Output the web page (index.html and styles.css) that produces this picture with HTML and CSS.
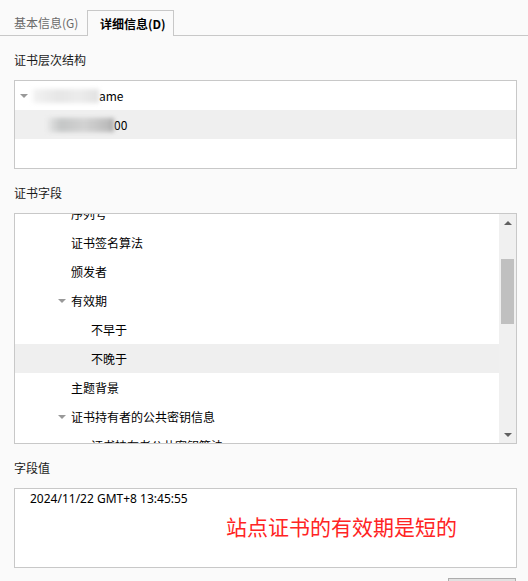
FILE: index.html
```html
<!DOCTYPE html>
<html lang="zh-CN">
<head>
<meta charset="UTF-8">
<title>证书查看器</title>
<link rel="stylesheet" href="styles.css">
</head>
<body>
    <div class="tabs">
        <div class="tab">基本信息(G)</div>
        <div class="tab active">详细信息(D)</div>
    </div>

    <div class="content">
        <div class="label">证书层次结构</div>
        <div class="box chain">
            <div class="row">
                <span class="caret"></span>
                <span class="smudge wide"></span><span>ame</span>
            </div>
            <div class="row selected indent-1">
                <span class="smudge dark"></span><span>00</span>
            </div>
        </div>

        <div class="label">证书字段</div>
        <div class="box fields">
            <div class="tree-view">
                <ul class="tree">
                    <li class="row lvl-1">序列号</li>
                    <li class="row lvl-1">证书签名算法</li>
                    <li class="row lvl-1">颁发者</li>
                    <li class="row lvl-1 open"><span class="caret"></span>有效期</li>
                    <li class="row lvl-2">不早于</li>
                    <li class="row lvl-2 selected">不晚于</li>
                    <li class="row lvl-1">主题背景</li>
                    <li class="row lvl-1 open"><span class="caret"></span>证书持有者的公共密钥信息</li>
                    <li class="row lvl-2">证书持有者公共密钥算法</li>
                </ul>
            </div>
            <div class="scrollbar">
                <div class="sb-btn"><span class="arrow up"></span></div>
                <div class="sb-track"><div class="sb-thumb"></div></div>
                <div class="sb-btn"><span class="arrow down"></span></div>
            </div>
        </div>

        <div class="label">字段值</div>
        <div class="box value">
            <div class="value-text">2024/11/22 GMT+8 13:45:55</div>
            <div class="note">站点证书的有效期是短的</div>
        </div>

        <div class="footer">
            <button class="btn">导出(E)...</button>
        </div>
    </div>
</body>
</html>
```

FILE: styles.css
```css
/* Global styles */
body {
    margin: 0;
    background-color: #fafafa;
    font-family: "Noto Sans CJK SC", "Noto Sans", sans-serif;
    font-size: 12px;
    color: #1a1a1a;
    overflow: hidden;
}

/* Tabs */
.tabs {
    display: flex;
    align-items: flex-end;
    height: 35px;
    border-bottom: 1px solid #c8c8c8;
}
.tab {
    width: 87px;
    height: 25px;
    line-height: 25px;
    padding-left: 14px;
    box-sizing: border-box;
    color: #6a6a6a;
}
.tab.active {
    width: 87px;
    height: 26px;
    margin-bottom: -1px;
    padding-left: 12px;
    border: 1px solid #c8c8c8;
    border-bottom: none;
    background-color: #fafafa;
    color: #000;
    font-weight: bold;
}

.content {
    padding: 0 11px 0 14px;
}
.label {
    line-height: 16px;
    padding: 16px 0 12px;
}

/* Boxes */
.box {
    border: 1px solid #c8c8c8;
    background-color: #fff;
}
.chain {
    height: 87px;
}
.row {
    display: flex;
    align-items: center;
    height: 29px;
    color: #000;
    white-space: nowrap;
}
.row.selected {
    background-color: #efefef;
}
.chain .row {
    padding-left: 5px;
}
.chain .row.indent-1 {
    padding-left: 33px;
}
.caret {
    display: inline-block;
    width: 0;
    height: 0;
    border-left: 4px solid transparent;
    border-right: 4px solid transparent;
    border-top: 4px solid #999;
    margin-right: 5px;
}
.smudge {
    display: inline-block;
    height: 14px;
    filter: blur(2px);
}
.smudge.wide {
    width: 66px;
    background: linear-gradient(90deg, #f2f2f2, #e6e6e6 40%, #ececec 70%, #e2e2e2);
}
.smudge.dark {
    width: 66px;
    background: linear-gradient(90deg, #e4e4e4, #c4c6c6 20%, #d2d2d2 55%, #bdbdbd 90%, #a9a9a9);
}

/* Field tree */
.fields {
    display: flex;
    height: 229px;
}
.tree-view {
    flex: 1;
    overflow: hidden;
}
.tree {
    list-style: none;
    margin: -15px 0 0;
    padding: 0;
}
.tree .lvl-1 {
    padding-left: 56px;
}
.tree .lvl-1.open {
    padding-left: 43px;
}
.tree .lvl-2 {
    padding-left: 76px;
}

/* Scrollbar */
.scrollbar {
    display: flex;
    flex-direction: column;
    width: 17px;
    background-color: #f0f0f0;
}
.sb-btn {
    display: flex;
    align-items: center;
    justify-content: center;
    height: 17px;
}
.sb-track {
    flex: 1;
}
.sb-thumb {
    margin: 28px 2px 0;
    height: 65px;
    background-color: #c0c0c0;
}
.arrow {
    width: 0;
    height: 0;
    border-left: 4px solid transparent;
    border-right: 4px solid transparent;
}
.arrow.up {
    border-bottom: 4px solid #606060;
}
.arrow.down {
    border-top: 4px solid #606060;
}

/* Field value */
.value {
    position: relative;
    height: 78px;
}
.value-text {
    font-family: "Noto Sans", sans-serif;
    line-height: 18px;
    padding: 1px 0 0 15px;
    color: #000;
}
.note {
    position: absolute;
    left: 211px;
    top: 23px;
    font-size: 21px;
    line-height: 28px;
    color: #ff2424;
}

.footer {
    display: flex;
    justify-content: flex-end;
    padding-top: 10px;
}
.btn {
    width: 68px;
    height: 26px;
    margin-right: 1px;
    padding-top: 6px;
    border: 1px solid #adadad;
    background-color: #e1e1e1;
    font-family: inherit;
    font-size: 12px;
}
```
